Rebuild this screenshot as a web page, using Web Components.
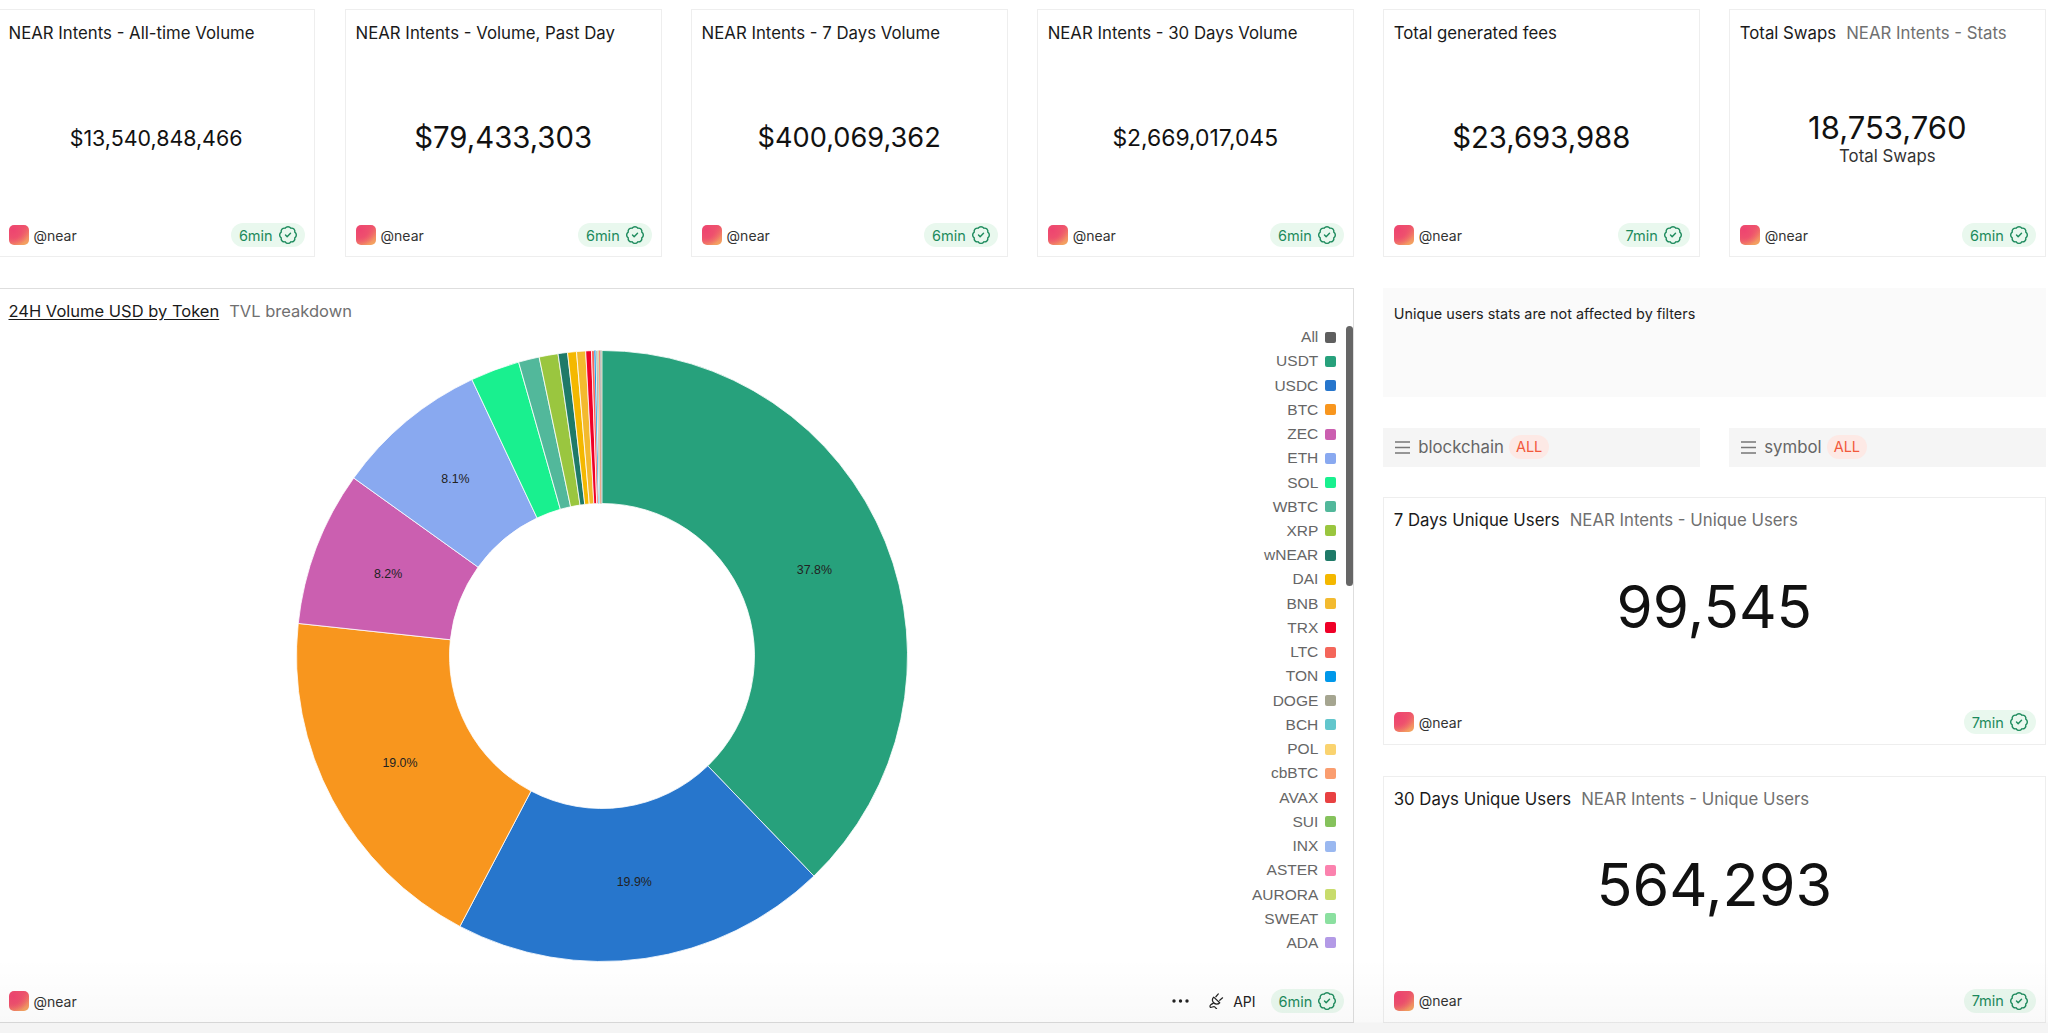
<!DOCTYPE html>
<html><head><meta charset="utf-8"><title>NEAR Intents</title>
<style>
html,body{margin:0;padding:0;height:1033px;overflow:hidden;background:#fff;font-family:Inter,"Liberation Sans",sans-serif;color:#111}
</style></head>
<body>
<x-dash>
  <x-stat style="margin:0 1px 0 -1px" title="NEAR Intents - All-time Volume" value="$13,540,848,466" size="21.4" time="6min"></x-stat>
  <x-stat title="NEAR Intents - Volume, Past Day" value="$79,433,303" size="29.3" time="6min"></x-stat>
  <x-stat title="NEAR Intents - 7 Days Volume" value="$400,069,362" size="27.2" time="6min"></x-stat>
  <x-stat title="NEAR Intents - 30 Days Volume" value="$2,669,017,045" size="22.9" time="6min"></x-stat>
  <x-stat title="Total generated fees" value="$23,693,988" size="29.3" time="7min"></x-stat>
  <x-stat title="Total Swaps" sub="NEAR Intents - Stats" value="18,753,760" caption="Total Swaps" size="31" time="6min"></x-stat>
  <x-chart slot="chart" style="margin-left:-1px"></x-chart>
  <x-note slot="side">Unique users stats are not affected by filters</x-note>
  <div slot="side" style="display:grid;grid-template-columns:1fr 1fr;column-gap:29.4px">
    <x-filter>blockchain</x-filter><x-filter>symbol</x-filter>
  </div>
  <x-stat slot="side" class="big" style="height:248px;--pt:13px;--pb:10px" lift="27" title="7 Days Unique Users" sub="NEAR Intents - Unique Users" value="99,545" size="58.4" time="7min"></x-stat>
  <x-stat slot="side" class="big" style="height:247px;--pt:13px" lift="27" title="30 Days Unique Users" sub="NEAR Intents - Unique Users" value="564,293" size="59.3" time="7min"></x-stat>
</x-dash>
<script>
const CHECK='<svg width="20" height="20" viewBox="0 0 24 24" fill="none" stroke="currentColor" stroke-width="1.7" stroke-linecap="round" stroke-linejoin="round"><path d="M3.85 8.62a4 4 0 0 1 4.78-4.77 4 4 0 0 1 6.74 0 4 4 0 0 1 4.78 4.78 4 4 0 0 1 0 6.74 4 4 0 0 1-4.77 4.78 4 4 0 0 1-6.75 0 4 4 0 0 1-4.78-4.77 4 4 0 0 1 0-6.76Z"/><path d="m9 12 2 2 4-4"/></svg>';
function el(name,cls){
  customElements.define(name,cls);
}
el('x-pill',class extends HTMLElement{connectedCallback(){
  this.attachShadow({mode:'open'}).innerHTML=`<style>:host{display:inline-flex;align-items:center;gap:5px;height:24px;padding:0 7px 0 8px;border-radius:12px;background:#e9f8ee;color:#1c8a5c;font:14.5px Inter,"Liberation Sans",sans-serif}svg{display:block}</style><slot></slot>${CHECK}`;
}});
el('x-foot',class extends HTMLElement{connectedCallback(){
  this.attachShadow({mode:'open'}).innerHTML=`<style>:host{display:flex;align-items:center;height:24px;font:14px Inter,"Liberation Sans",sans-serif;color:#333}
  .a{width:20px;height:20px;border-radius:5px;background:radial-gradient(circle at 20% 25%,#ee4470 0,#ee4f6e 35%,transparent 75%),linear-gradient(155deg,#ee4a6c 20%,#f4a860 95%);margin-right:5px;flex:none}
  .r{margin-left:auto;display:flex;align-items:center;margin-right:-1px}</style>
  <div class="a"></div><span>@near</span><div class="r"><slot></slot><x-pill>${this.getAttribute('time')}</x-pill></div>`;
}});
el('x-stat',class extends HTMLElement{connectedCallback(){
  const g=n=>this.getAttribute(n);
  const cap=g('caption');
  const lift=g('lift');
  this.attachShadow({mode:'open'}).innerHTML=`<style>:host{display:flex;flex-direction:column;box-sizing:border-box;height:248px;border:1px solid #eeeeee;padding:var(--pt,14px) 10px var(--pb,9px) 9.500px;background:#fff;min-width:0}
  .t{font-size:16.800px;line-height:19px;color:#1a1a1a;white-space:nowrap}.s{color:#707070;margin-left:10px}
  .m{flex:1;display:flex;flex-direction:column;align-items:center;justify-content:center;color:#111;${lift?`padding-bottom:${lift}px`:`padding-top:${cap?'10':'10'}px`}}
  .v{font-size:${g('size')}px;line-height:1.15}.c{font-size:16.800px;line-height:19px;color:#333;margin-top:2px}</style>
  <div class="t">${g('title')}${g('sub')?`<span class="s">${g('sub')}</span>`:''}</div>
  <div class="m"><div class="v">${g('value')}</div>${cap?`<div class="c">${cap}</div>`:''}</div>
  <x-foot time="${g('time')}"></x-foot>`;
}});
el('x-note',class extends HTMLElement{connectedCallback(){
  this.attachShadow({mode:'open'}).innerHTML=`<style>:host{display:block;box-sizing:border-box;height:109px;background:#fafafa;padding:17px 10.500px;font-size:14.400px;line-height:18px;color:#222}</style><slot></slot>`;
}});
el('x-filter',class extends HTMLElement{connectedCallback(){
  this.attachShadow({mode:'open'}).innerHTML=`<style>:host{display:flex;align-items:center;height:39px;background:#f5f5f5;padding-left:12px;font-size:16.800px;color:#666}
  svg{margin-right:8px;flex:none}.p{margin-left:5px;height:24px;line-height:24px;padding:0 7px;border-radius:12px;background:#fde9e5;color:#f2593c;font-size:14.500px}</style>
  <svg width="15" height="13" viewBox="0 0 15 13" stroke="#777" stroke-width="1.5"><path d="M0 1h15M0 6.5h15M0 12h15"/></svg><slot></slot><span class="p">ALL</span>`;
}});
const DATA=[['USDT','#27a17c',37.8],['USDC','#2776cc',19.9],['BTC','#f8961e',19.0],['ZEC','#cb5fb0',8.2],['ETH','#89a9f0',8.1],['SOL','#19f08f',2.6],['WBTC','#52b89b',1.1],['XRP','#9ac63f',1.0],['wNEAR','#1f7a68',.5],['DAI','#f4b800',.47],['BNB','#f3ba2f',.48],['TRX','#ef0027',.3],['LTC','#f4665a',.15],['TON','#0098ea',.08],['DOGE','#a5a590',.1],['BCH','#62c6cc',.03],['POL','#fad36f',.03],['cbBTC','#fa9d6f',.03],['AVAX','#e84142',.03],['SUI','#85c25c',.02],['INX','#9ab8f0',.02],['ASTER','#fb82ae',.02],['AURORA','#c8dc6c',.02],['SWEAT','#8be0a0',.01],['ADA','#b39ae6',.01]];
el('x-donut',class extends HTMLElement{connectedCallback(){
  const C=306,R=305.5,r=152.5;let a=0,out='',lab='';
  const tot=DATA.reduce((s,d)=>s+d[2],0);
  const pt=(rad,an)=>[(C+rad*Math.sin(an)).toFixed(2),(C-rad*Math.cos(an)).toFixed(2)];
  for(const d of DATA){
    const da=d[2]/tot*2*Math.PI,b=a+da,L=da>Math.PI?1:0;
    const[p1,p2,p3,p4]=[pt(R,a),pt(R,b),pt(r,b),pt(r,a)];
    const st=d[2]>=.1?'stroke="#fff" stroke-width=".8"':'';
    out+=`<path d="M${p1}A${R} ${R} 0 ${L} 1 ${p2}L${p3}A${r} ${r} 0 ${L} 0 ${p4}Z" fill="${d[1]}" ${st}/>`;
    if(d[2]>5){const m=pt((R+r)/2,(a+b)/2);lab+=`<text x="${m[0]}" y="${m[1]}" text-anchor="middle" dominant-baseline="middle">${d[2].toFixed(1)}%</text>`;}
    a=b;
  }
  this.attachShadow({mode:'open'}).innerHTML=`<style>:host{display:block;width:612px;height:612px}svg{display:block}text{font:12.400px "Liberation Sans",sans-serif;fill:#222}</style><svg width="612" height="612" viewBox="0 0 612 612">${out}${lab}</svg>`;
}});
el('x-legend',class extends HTMLElement{connectedCallback(){
  const rows=[['All','#5f5f5f'],...DATA].map(d=>`<div class="r">${d[0]}<i style="background:${d[1]}"></i></div>`).join('');
  this.attachShadow({mode:'open'}).innerHTML=`<style>:host{display:block;font:15.500px "Liberation Sans",sans-serif;color:#666}
  .r{display:flex;justify-content:flex-end;align-items:center;height:24.24px;white-space:nowrap}i{width:11px;height:11px;border-radius:2px;margin-left:7px}</style>${rows}`;
}});
el('x-chart',class extends HTMLElement{connectedCallback(){
  this.attachShadow({mode:'open'}).innerHTML=`<style>:host{display:flex;flex-direction:column;position:relative;box-sizing:border-box;height:735px;border:1px solid #dedede;padding:13px 9.5px 9px;background:#fff}
  .t{font-size:16.500px;line-height:19px;color:#1a1a1a;white-space:nowrap}.t u{text-underline-offset:2px}.s{color:#707070;margin-left:10px}
  .b{display:flex;flex:1;align-items:flex-start;min-height:0}
  x-donut{margin:29px 0 0 287px}x-legend{margin:4px 7px 0 auto}
  .bar{position:absolute;right:0;top:37px;width:7px;height:260px;border-radius:4px;background:#666}
  .api{display:flex;align-items:center;margin-right:15px;color:#222}.dots{margin-right:18px}svg{display:block}.plug{margin-right:9px}</style>
  <div class="t"><u>24H Volume USD by Token</u><span class="s">TVL breakdown</span></div>
  <div class="b"><x-donut></x-donut><x-legend></x-legend></div>
  <div class="bar"></div>
  <x-foot time="6min"><div class="api"><svg class="dots" width="17" height="4" viewBox="0 0 17 4" fill="#222"><circle cx="2" cy="2" r="1.7"/><circle cx="8.5" cy="2" r="1.7"/><circle cx="15" cy="2" r="1.7"/></svg><svg class="plug" width="17" height="18" viewBox="0 0 24 24" fill="none" stroke="#222" stroke-width="1.7" stroke-linecap="round" stroke-linejoin="round"><path d="M16 2l-3.5 4M22 7.5l-4 3.5"/><path d="M9.5 6.5l8.500 8a5.800 5.800 0 0 1-8.500 0 5.800 5.800 0 0 1 0-8z"/><path d="M9 15c-3 1.500-6 3.500-4.500 5.500s4-1.500 6-0.500 1 2.500 3 2.500"/></svg>API</div></x-foot>`;
}});
el('x-dash',class extends HTMLElement{connectedCallback(){
  this.attachShadow({mode:'open'}).innerHTML=`<style>:host{display:block;position:relative;height:1033px;width:2048px;overflow:hidden}
  .g{display:grid;grid-template-columns:repeat(6,316.67px);column-gap:29.4px;row-gap:31px;margin:9px 0 0 -1px;grid-template-rows:248px 735px}
  .c{grid-column:1/span 4;display:block}.d{grid-column:5/span 2;display:flex;flex-direction:column}
  .d ::slotted(*){margin-bottom:30.500px;flex:none}
  .o{position:absolute;left:0;right:0;bottom:0;height:75px;background:linear-gradient(rgba(0,0,0,0),rgba(0,0,0,.022) 85%,rgba(0,0,0,.045) 86.500%,rgba(0,0,0,.045));pointer-events:none}</style>
  <div class="g"><slot></slot><div class="c"><slot name="chart"></slot></div><div class="d"><slot name="side"></slot></div></div><div class="o"></div>`;
}});
</script>
</body></html>
